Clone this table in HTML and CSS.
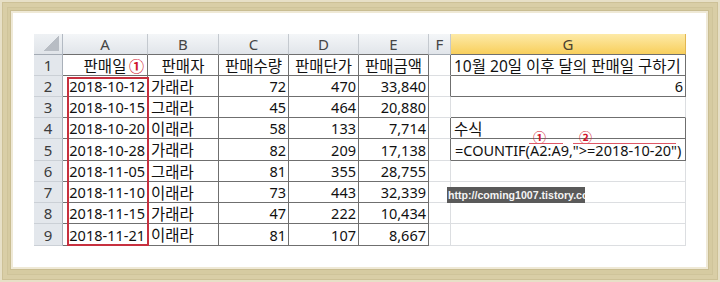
FILE: index.html
```html
<!DOCTYPE html>
<html lang="ko">
<head>
<meta charset="utf-8">
<title>COUNTIF 날짜 조건</title>
<link rel="stylesheet" href="styles.css">
</head>
<body>
<div class="frame">
  <div class="paper">
    <div class="sheet">
      <div class="corner"></div>
      <div class="hd hd-t">A</div>
      <div class="hd hd-t">B</div>
      <div class="hd hd-t">C</div>
      <div class="hd hd-t">D</div>
      <div class="hd hd-t">E</div>
      <div class="hd">F</div>
      <div class="hd hd-t hd-sel">G</div>

      <div class="rh">1</div>
      <div class="cell t c ko a1">판매일<span class="mark mark-a1">①</span></div>
      <div class="cell t c ko">판매자</div>
      <div class="cell t c ko">판매수량</div>
      <div class="cell t c ko">판매단가</div>
      <div class="cell t c ko">판매금액</div>
      <div class="cell rd"></div>
      <div class="cell t l ko">10월 20일 이후 달의 판매일 구하기</div>

      <div class="rh">2</div>
      <div class="cell t r">2018-10-12</div>
      <div class="cell t l ko">가래라</div>
      <div class="cell t r">72</div>
      <div class="cell t r">470</div>
      <div class="cell t r">33,840</div>
      <div class="cell rd"></div>
      <div class="cell t r">6</div>

      <div class="rh">3</div>
      <div class="cell t r">2018-10-15</div>
      <div class="cell t l ko">그래라</div>
      <div class="cell t r">45</div>
      <div class="cell t r">464</div>
      <div class="cell t r">20,880</div>
      <div class="cell"></div>
      <div class="cell bd"></div>

      <div class="rh">4</div>
      <div class="cell t r">2018-10-20</div>
      <div class="cell t l ko">이래라</div>
      <div class="cell t r">58</div>
      <div class="cell t r">133</div>
      <div class="cell t r">7,714</div>
      <div class="cell rd"></div>
      <div class="cell t l ko">수식</div>

      <div class="rh">5</div>
      <div class="cell t r">2018-10-28</div>
      <div class="cell t l ko">가래라</div>
      <div class="cell t r">82</div>
      <div class="cell t r">209</div>
      <div class="cell t r">17,138</div>
      <div class="cell rd"></div>
      <div class="cell t l formula">=COUNTIF(A2:A9,"&gt;=2018-10-20")</div>

      <div class="rh">6</div>
      <div class="cell t r">2018-11-05</div>
      <div class="cell t l ko">그래라</div>
      <div class="cell t r">81</div>
      <div class="cell t r">355</div>
      <div class="cell t r">28,755</div>
      <div class="cell"></div>
      <div class="cell"></div>

      <div class="rh">7</div>
      <div class="cell t r">2018-11-10</div>
      <div class="cell t l ko">이래라</div>
      <div class="cell t r">73</div>
      <div class="cell t r">443</div>
      <div class="cell t r">32,339</div>
      <div class="cell"></div>
      <div class="cell"></div>

      <div class="rh">8</div>
      <div class="cell t r">2018-11-15</div>
      <div class="cell t l ko">가래라</div>
      <div class="cell t r">47</div>
      <div class="cell t r">222</div>
      <div class="cell t r">10,434</div>
      <div class="cell"></div>
      <div class="cell"></div>

      <div class="rh">9</div>
      <div class="cell t r">2018-11-21</div>
      <div class="cell t l ko">이래라</div>
      <div class="cell t r">81</div>
      <div class="cell t r">107</div>
      <div class="cell t r">8,667</div>
      <div class="cell"></div>
      <div class="cell"></div>

      <div class="redbox"></div>
      <span class="mark fmark fmark-1">①</span>
      <span class="fline fline-1"></span>
      <span class="mark fmark fmark-2">②</span>
      <span class="fline fline-2"></span>
      <div class="watermark">http://coming1007.tistory.com</div>
    </div>
  </div>
</div>
</body>
</html>
```

FILE: styles.css
```css
html, body {
  margin: 0;
  padding: 0;
  background: #ffffff;
}

.frame {
  width: 720px;
  height: 282px;
  box-sizing: border-box;
  padding: 13px 14px 15px 13px;
  background: #d6cba1;
  box-shadow: inset 0 0 0 2px #e7e0c7, inset 0 0 0 3px #cdc197, inset 0 0 0 7px #d9cea6, inset 0 0 0 8px #cfc49a;
}

.paper {
  height: 100%;
  box-sizing: border-box;
  background: #ffffff;
  padding: 21px 0 0 21px;
  box-shadow: 0 0 0 2px #efe9d6, 0 0 0 3px #c9bd92;
}

.sheet {
  position: relative;
  display: grid;
  grid-template-columns: 29px 85px 71px 70px 70px 70px 22px 235px;
  grid-template-rows: 21px 21px 21px 21px 21px 22px 21px 21px 21px 22px 21px;
  width: 652px;
  font-family: "Noto Sans", "Noto Sans CJK KR", sans-serif;
  font-size: 14.5px;
  color: #111111;
}

.corner,
.hd,
.rh,
.cell {
  box-sizing: border-box;
  border-right: 1px solid #dcdee1;
  border-bottom: 1px solid #dcdee1;
  display: flex;
  align-items: center;
  white-space: nowrap;
  overflow: hidden;
}

.corner {
  background:
    linear-gradient(to bottom right, transparent 50%, #b8bdc4 50%) no-repeat right 3px bottom 3px / 15px 15px,
    linear-gradient(#eef1f4, #e0e4e9);
  border-right-color: #b3bac3;
  border-bottom-color: #a4abb4;
}

.hd {
  justify-content: center;
  background: linear-gradient(#f4f6f8, #e1e5ea);
  border-right-color: #c4c9cf;
  border-bottom-color: #a4abb4;
  color: #454545;
  font-size: 15px;
}

.hd-t {
  border-bottom-color: #6f6f6f;
}

.hd-sel {
  background: linear-gradient(#fdeaa8, #f8cf5c);
  border-right-color: #e2b650;
  color: #4a4130;
}

.rh {
  justify-content: center;
  background: #e3e7ec;
  border-right-color: #a9b0b9;
  border-bottom-color: #cbd0d6;
  color: #3c3c3c;
  font-size: 15px;
}

.cell.t {
  border-right-color: #6f6f6f;
  border-bottom-color: #6f6f6f;
}

.cell.rd {
  border-right-color: #6f6f6f;
}

.cell.bd {
  border-bottom-color: #6f6f6f;
}

.cell.r {
  justify-content: flex-end;
  padding-right: 2px;
}

.cell.l {
  justify-content: flex-start;
  padding-left: 3px;
}

.cell.c {
  justify-content: center;
}

.cell.ko {
  font-size: 15.5px;
}

.cell.formula {
  padding-left: 4px;
}

.a1 {
  position: relative;
}

.mark {
  font-family: "Noto Sans CJK KR", sans-serif;
  font-weight: bold;
  color: #d0142c;
  line-height: 1;
}

.mark-a1 {
  position: absolute;
  right: 3px;
  top: 3px;
  font-size: 15px;
}

.redbox {
  position: absolute;
  left: 33px;
  top: 43px;
  width: 82px;
  height: 169px;
  box-sizing: border-box;
  border: 2px solid #c7303f;
}

.fmark {
  position: absolute;
  font-size: 13px;
  top: 96px;
}

.fmark-1 {
  left: 499px;
}

.fmark-2 {
  left: 545px;
}

.fline {
  position: absolute;
  top: 109px;
  height: 1px;
  background: #e05766;
}

.fline-1 {
  left: 495px;
  width: 34px;
}

.fline-2 {
  left: 539px;
  width: 103px;
}

.watermark {
  position: absolute;
  left: 413px;
  top: 153px;
  width: 138px;
  height: 16px;
  overflow: hidden;
  white-space: nowrap;
  background: #5a5a5a;
  color: #f4f4f4;
  font-family: "Liberation Sans", Arial, sans-serif;
  font-weight: bold;
  font-size: 10.6px;
  line-height: 16px;
  padding-left: 1px;
  box-sizing: border-box;
}
```
